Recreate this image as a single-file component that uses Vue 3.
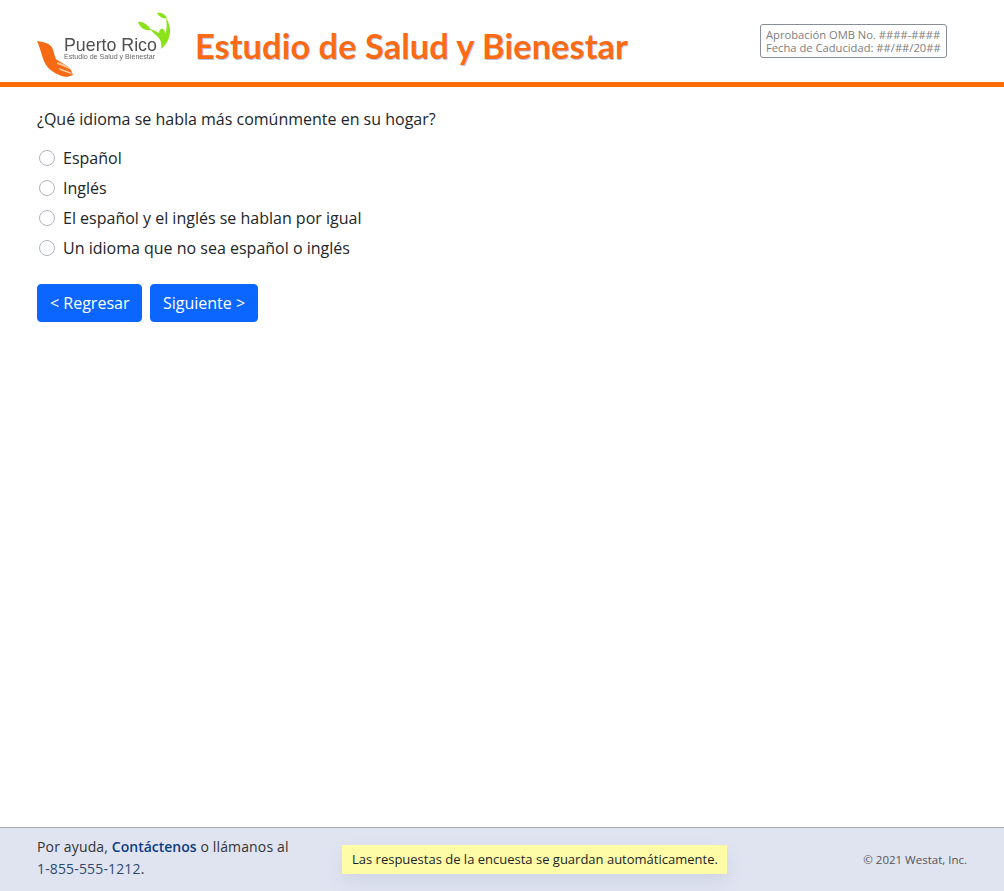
<script setup>
const options = [
  'Español',
  'Inglés',
  'El español y el inglés se hablan por igual',
  'Un idioma que no sea español o inglés'
]
</script>

<template>
  <div class="page">
    <header class="header">
      <div class="logo">
        <svg class="logo-art" width="140" height="80" viewBox="0 0 140 80">
          <path d="M0 41 C6 42 11 43 14 46 C17 50 17 55 19 59 C23 62 30 65 34 70 L36 75 L30 77 C22 76 14 72 9 65 C5 58 4 50 0 41 Z" fill="#f56a12" />
          <path d="M20 62 C24 63 29 65 33 68 L32 69 C28 67 24 65 20 64 Z" fill="#fbc79c" />
          <path d="M22 68 L35 73 L34 74 L23 70 Z" fill="#fbd3b4" />
          <path d="M101 22 C106 21 111 25 114 30 C108 31 103 28 101 22 Z" fill="#8be21a" />
          <path d="M120 13 C124 12 128 14 130 18 C126 19 122 17 120 13 Z" fill="#8be21a" />
          <path d="M113 29 C117 30 120 32 122 33 C122 30 124 28 126 29 C128 30 128 32 128 34 C130 30 130 24 129 18 C132 22 133.5 28 133 33 C132 40 129 45 124 49 C125 45 124 40 121 37 C118 34 115 32 113 29 Z" fill="#8be21a" />
        </svg>
        <span class="logo-name">Puerto Rico</span>
        <span class="logo-sub">Estudio de Salud y Bienestar</span>
      </div>
      <h1 class="title">Estudio de Salud y Bienestar</h1>
      <div class="omb">
        <div>Aprobación OMB No. ####-####</div>
        <div>Fecha de Caducidad: ##/##/20##</div>
      </div>
    </header>

    <main class="main">
      <p class="question">¿Qué idioma se habla más comúnmente en su hogar?</p>
      <div class="options">
        <label v-for="o in options" :key="o" class="option">
          <span class="radio"></span>
          <span>{{ o }}</span>
        </label>
      </div>
      <div class="actions">
        <button class="btn back">&lt; Regresar</button>
        <button class="btn next">Siguiente &gt;</button>
      </div>
    </main>

    <footer class="footer">
      <div class="help">Por ayuda, <a class="link">Contáctenos</a> o llámanos al<br><span class="phone">1-855-555-1212</span>.</div>
      <div class="saved">Las respuestas de la encuesta se guardan automáticamente.</div>
      <div class="copy">© 2021 Westat, Inc.</div>
    </footer>
  </div>
</template>

<style>
html, body { margin: 0; padding: 0; background: #fff; }
</style>

<style scoped>
.page {
  height: 891px;
  display: flex;
  flex-direction: column;
  font-family: "Open Sans", sans-serif;
  color: #212529;
  font-size: 16px;
}
.header {
  height: 82px;
  border-bottom: 5px solid #ff6c00;
  display: flex;
  align-items: flex-start;
  flex-shrink: 0;
  padding-left: 37px;
}
.logo {
  position: relative;
  width: 140px;
  height: 82px;
  flex-shrink: 0;
  filter: blur(0.35px);
}
.logo-art { position: absolute; left: 0; top: 0; }
.logo-name {
  position: absolute;
  left: 27px;
  top: 34px;
  font: 17.8px/22px "Liberation Sans", sans-serif;
  color: #4f4f4f;
  white-space: nowrap;
}
.logo-sub {
  position: absolute;
  left: 27px;
  top: 51px;
  font: 7.1px/12px "Liberation Sans", sans-serif;
  color: #666;
  white-space: nowrap;
}
.title {
  margin: 25px 0 0 18px;
  font-family: "Lato", sans-serif;
  font-weight: 700;
  font-size: 34.5px;
  line-height: 42px;
  color: #fc6a14;
  text-shadow: 0.6px 0.6px 0.4px rgba(70, 100, 170, 0.4);
  white-space: nowrap;
}
.omb {
  margin: 24px 57px 0 auto;
  border: 1px solid #868e96;
  border-radius: 3px;
  padding: 3px 5px;
  width: 175px;
  height: 26px;
  font-size: 11.2px;
  line-height: 13px;
  color: #7d7d7d;
  white-space: nowrap;
}
.main {
  flex: 1;
  padding: 20px 37px 0;
}
.question { margin: 0; line-height: 24px; }
.options {
  margin-top: 12px;
  display: flex;
  flex-direction: column;
}
.option {
  height: 30px;
  display: flex;
  align-items: center;
  gap: 8px;
  padding-left: 2px;
}
.radio {
  width: 14px;
  height: 14px;
  border: 1px solid #adb5bd;
  border-radius: 50%;
  background: #fff;
  flex-shrink: 0;
}
.actions {
  margin-top: 21px;
  display: flex;
  gap: 8px;
}
.btn {
  height: 38px;
  border: 1px solid #0a66ff;
  background: #0a66ff;
  color: #fff;
  border-radius: 4px;
  padding: 0 12px;
  font: 16px/24px "Open Sans", sans-serif;
}
.next { padding: 0 11.5px; }
.footer {
  height: 64px;
  box-sizing: border-box;
  border-top: 1px solid #a9abb0;
  background: #e0e4f1;
  display: flex;
  align-items: center;
  flex-shrink: 0;
  padding: 0 37px;
  font-size: 14px;
  line-height: 22px;
}
.help {
  width: 305px;
  flex-shrink: 0;
  margin-bottom: 4px;
  color: #333;
  letter-spacing: 0.15px;
}
.link { color: #0b3c80; font-weight: 600; letter-spacing: 0; }
.phone { color: #2c4a70; }
.saved {
  background: #fffca8;
  padding: 0 9.5px 0 10px;
  height: 29px;
  line-height: 29px;
  font-size: 13px;
  box-shadow: 0 8px 16px rgba(120, 130, 170, 0.15);
  white-space: nowrap;
}
.copy {
  margin-left: auto;
  font-size: 11.5px;
  color: #555;
}
</style>
